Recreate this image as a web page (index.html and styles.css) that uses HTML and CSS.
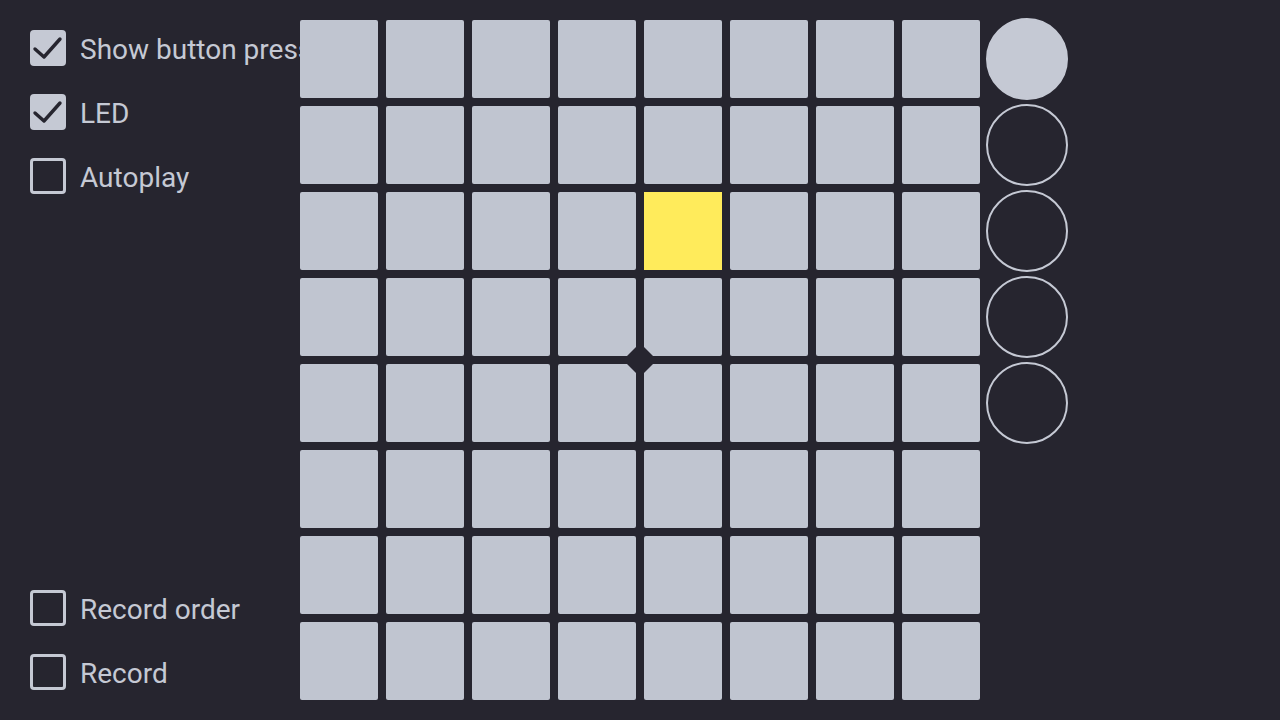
FILE: index.html
```html
<!DOCTYPE html>
<html>
<head>
<meta charset="utf-8">
<link rel="stylesheet" href="styles.css">
</head>
<body>
<div class="app">
  <aside class="side">
    <div class="group">
      <label class="opt"><span class="box checked"><svg viewBox="0 0 36 36"><path d="M5 19 L14 27 L30 9"/></svg></span><span class="lbl">Show button presses</span></label>
      <label class="opt"><span class="box checked"><svg viewBox="0 0 36 36"><path d="M5 19 L14 27 L30 9"/></svg></span><span class="lbl">LED</span></label>
      <label class="opt"><span class="box"></span><span class="lbl">Autoplay</span></label>
    </div>
    <div class="group">
      <label class="opt"><span class="box"></span><span class="lbl">Record order</span></label>
      <label class="opt"><span class="box"></span><span class="lbl">Record</span></label>
    </div>
  </aside>
  <main class="pad">
    <div class="grid" id="grid"></div>
    <div class="diamond"></div>
  </main>
  <div class="circles">
    <div class="circ filled"></div>
    <div class="circ"></div>
    <div class="circ"></div>
    <div class="circ"></div>
    <div class="circ"></div>
  </div>
</div>
<script src="app.js"></script>
</body>
</html>
```
FILE: app.js
```js
const g = document.getElementById('grid');
for (let r = 0; r < 8; r++) {
  for (let c = 0; c < 8; c++) {
    const d = document.createElement('div');
    d.className = 'cell' + (r === 2 && c === 4 ? ' lit' : '');
    g.appendChild(d);
  }
}
```
FILE: styles.css
```css
html, body {
  margin: 0;
  padding: 0;
  background: #26252f;
  width: 1280px;
  height: 720px;
  overflow: hidden;
}
.app {
  display: flex;
  height: 720px;
  font-family: Roboto, "Liberation Sans", sans-serif;
  color: #c5c9d4;
}
.side {
  width: 300px;
  flex: none;
  overflow: hidden;
  display: flex;
  flex-direction: column;
  justify-content: space-between;
  padding: 30px 0 30px 30px;
  box-sizing: border-box;
}
.group {
  display: flex;
  flex-direction: column;
  gap: 28px;
}
.opt {
  display: flex;
  align-items: center;
  gap: 14px;
  height: 36px;
  white-space: nowrap;
}
.box {
  width: 36px;
  height: 36px;
  box-sizing: border-box;
  border: 3px solid #c5c9d4;
  border-radius: 4px;
  flex: none;
  display: flex;
}
.box.checked {
  background: #c5c9d4;
  border: none;
}
.box svg {
  width: 36px;
  height: 36px;
}
.box svg path {
  fill: none;
  stroke: #26252f;
  stroke-width: 3.4;
  stroke-linecap: round;
  stroke-linejoin: round;
}
.lbl {
  font-size: 28px;
  line-height: 36px;
  padding-top: 4px;
}
.pad {
  position: relative;
  padding-top: 20px;
  width: 680px;
  flex: none;
}
.grid {
  display: grid;
  grid-template-columns: repeat(8, 78px);
  grid-auto-rows: 78px;
  gap: 8px;
}
.cell {
  background: #c0c5d0;
  border-radius: 2px;
}
.cell.lit {
  background: #ffeb5b;
  border-radius: 0;
}
.diamond {
  position: absolute;
  left: 328px;
  top: 348px;
  width: 24px;
  height: 24px;
  background: #26252f;
  transform: rotate(45deg);
}
.circles {
  display: flex;
  flex-direction: column;
  gap: 4px;
  padding-top: 18px;
  padding-left: 6px;
}
.circ {
  width: 82px;
  height: 82px;
  box-sizing: border-box;
  border: 2px solid #c5c9d4;
  border-radius: 50%;
}
.circ.filled {
  background: #c5c9d4;
}
```
